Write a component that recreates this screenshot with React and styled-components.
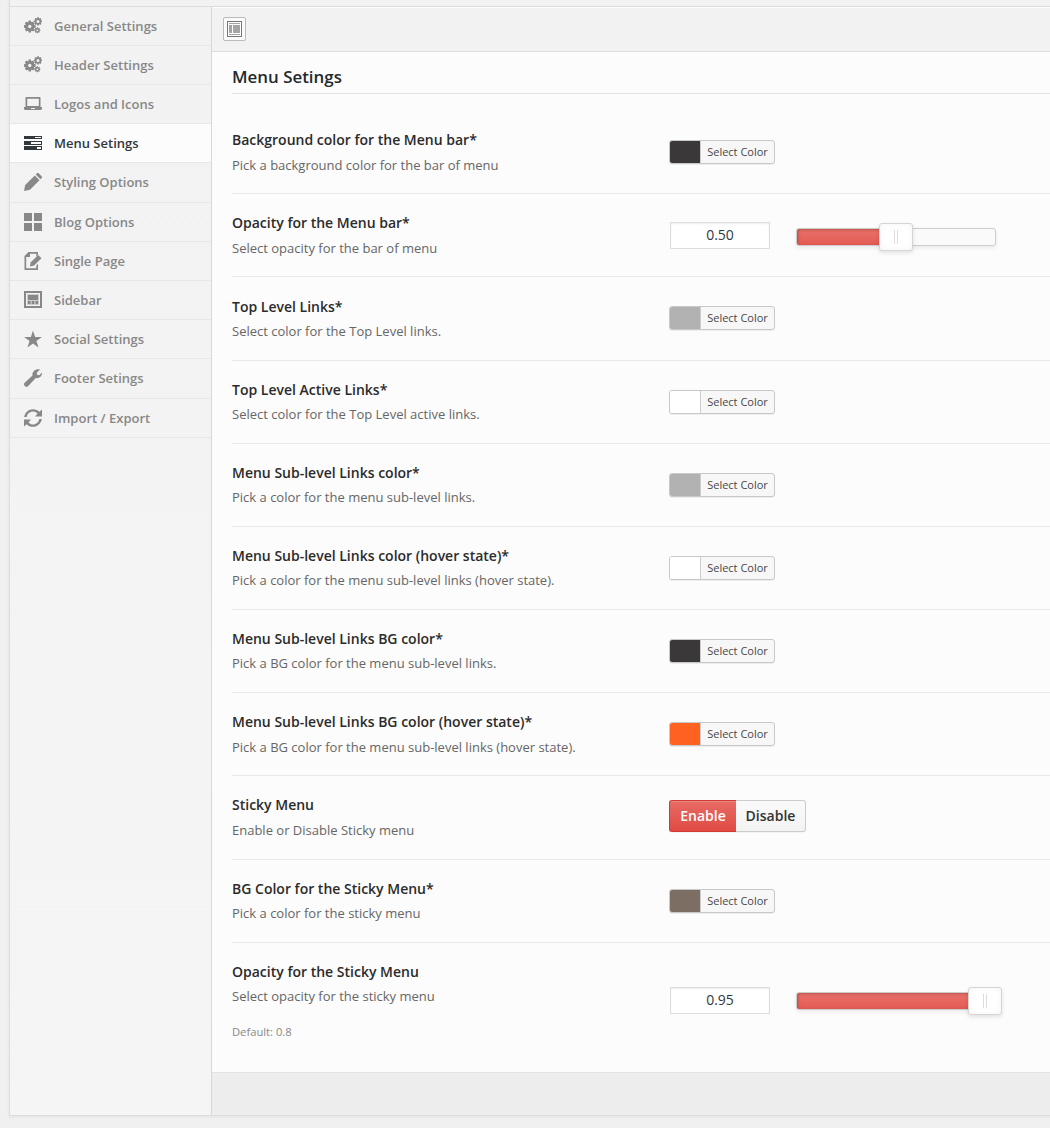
import React from 'react';
import styled, { createGlobalStyle, css } from 'styled-components';

const Global = createGlobalStyle`
  * { box-sizing: border-box; }
  html, body { margin: 0; padding: 0; }
  body {
    background: #f0f0f0;
    font-family: "Open Sans", "Liberation Sans", sans-serif;
    font-size: 13px;
    color: #444;
    overflow: hidden;
  }
`;

const Page = styled.div`
  height: 1128px;
  padding-left: 9px;
  overflow: hidden;
`;

const Panel = styled.div`
  width: 1100px;
  height: 1116px;
  border: 1px solid #dcdcdc;
  border-top: none;
  background: #f2f2f2;
  box-shadow: 0 1px 3px rgba(0, 0, 0, 0.06);
`;

const PanelTop = styled.div`
  height: 7px;
  border-bottom: 1px solid #dcdcdc;
`;

const PanelBody = styled.div`
  display: flex;
  height: 1108px;
`;

const Sidebar = styled.nav`
  width: 201px;
  flex: none;
  background: linear-gradient(#f2f2f2, #f5f5f5);
`;

const NavItem = styled.a`
  display: flex;
  align-items: flex-start;
  gap: 12px;
  height: ${(p) => (p.$tall ? 40 : 39)}px;
  padding: 10px 14px 0;
  border-bottom: 1px solid #e7e7e7;
  font-weight: 600;
  line-height: 18px;
  color: ${(p) => (p.$active ? '#32373c' : '#888')};
  background: ${(p) => (p.$active ? '#fcfcfc' : 'transparent')};

  svg { width: 18px; height: 18px; flex: none; display: block; fill: currentColor; }
`;

const Main = styled.main`
  flex: 1;
  display: flex;
  flex-direction: column;
  border-left: 1px solid #d8d8d8;
  background: #fcfcfc;
`;

const Toolbar = styled.div`
  height: 45px;
  padding: 10px 11px;
  border-bottom: 1px solid #dedede;
  background: #f2f2f2;
  box-shadow: inset 0 1px 0 #fcfcfc;
`;

const ExpandButton = styled.button`
  display: flex;
  align-items: center;
  justify-content: center;
  width: 23px;
  height: 24px;
  padding: 0;
  border: 1px solid #bbb;
  border-radius: 2px;
  background: #fafafa;
`;

const Content = styled.section`
  flex: 1;
  padding: 0 0 0 20px;
`;

const Heading = styled.h3`
  margin: 0 0 17px;
  height: 42px;
  padding-top: 13px;
  border-bottom: 1px solid #e4e4e4;
  font-size: 16.9px;
  line-height: 24px;
  font-weight: 600;
  color: #23282d;
`;

const Row = styled.div`
  display: flex;
  height: ${(p) => p.$height}px;
  border-bottom: ${(p) => (p.$last ? 'none' : '1px solid #e7e7e7')};
`;

const Label = styled.div`
  width: 437px;
  flex: none;
  padding-top: ${(p) => p.$top}px;
`;

const Title = styled.div`
  font-size: 14px;
  font-weight: 600;
  line-height: 20px;
  color: #2b2b2b;
`;

const Description = styled.div`
  margin-top: ${(p) => p.$gap}px;
  font-size: 13px;
  line-height: 18px;
  color: #666;
`;

const DefaultNote = styled.div`
  margin-top: 19px;
  font-size: 11.2px;
  line-height: 16px;
  color: #888;
`;

const Field = styled.div`
  display: flex;
  align-items: flex-start;
  padding-top: ${(p) => p.$top}px;
`;

const PickerButton = styled.button`
  display: flex;
  width: 106px;
  height: 24px;
  padding: 0;
  overflow: hidden;
  border: 1px solid #c8c8c8;
  border-radius: 3px;
  background: #f7f7f7;
  box-shadow: 0 1px 0 rgba(0, 0, 0, 0.06);
  font: 11px/22px "Open Sans", "Liberation Sans", sans-serif;
  color: #484848;
`;

const Swatch = styled.span`
  width: 30px;
  align-self: stretch;
  background: ${(p) => p.$color};
`;

const PickerText = styled.span`
  flex: 1;
  border-left: 1px solid #ccc;
  text-align: center;
`;

const NumberInput = styled.input`
  width: 100px;
  height: 27px;
  margin: 0 0 0 1px;
  padding: 0 0 3px;
  border: 1px solid #ddd;
  background: #fff;
  box-shadow: inset 0 1px 2px rgba(0, 0, 0, 0.07);
  font: 14px "Open Sans", "Liberation Sans", sans-serif;
  text-align: center;
  color: #32373c;
`;

const Track = styled.div`
  position: relative;
  width: 200px;
  height: 18px;
  margin: ${(p) => p.$offset}px 0 0 26px;
  border: 1px solid #ccc;
  border-radius: 3px;
  background: #fafafa;
  box-shadow: 0 2px 4px rgba(0, 0, 0, 0.07);
`;

const Fill = styled.div`
  height: 100%;
  border-radius: 2px;
  background: linear-gradient(#e8716a, #e45b53);
  box-shadow: inset 1px 1px 3px rgba(120, 40, 40, 0.4);
`;

const Handle = styled.div`
  position: absolute;
  top: -6px;
  width: 34px;
  height: 28px;
  margin-left: -17px;
  display: flex;
  align-items: center;
  justify-content: center;
  gap: 2px;
  border: 1px solid #d5d5d5;
  border-radius: 3px;
  background: #fff;
  box-shadow: inset 0 0 6px rgba(0, 0, 0, 0.05), 0 2px 4px rgba(0, 0, 0, 0.11);
`;

const Grip = styled.span`
  width: 1px;
  height: 14px;
  background: #ddd;
`;

const SwitchGroup = styled.div`
  display: flex;
  height: 32px;
  border-radius: 3px;
  box-shadow: 0 1px 0 rgba(0, 0, 0, 0.03);
`;

const SwitchOption = styled.button`
  width: ${(p) => p.$width}px;
  padding: 0;
  font: 600 14px/28px "Open Sans", "Liberation Sans", sans-serif;
  border: 1px solid #ccc;
  border-left: none;
  border-radius: 0 3px 3px 0;
  color: #333;
  background: linear-gradient(#fafafa, #f3f3f3);
  ${(p) => p.$on && css`
    border: 1px solid #cf3a32;
    border-right: none;
    border-radius: 3px 0 0 3px;
    color: #fff;
    background: linear-gradient(#e76b65, #e04b43);
    box-shadow: inset 0 1px 0 rgba(255, 255, 255, 0.2);
  `}
`;

const Footer = styled.footer`
  height: 43px;
  border-top: 1px solid #e3e3e3;
  background: #ededed;
`;

function gear(cx, cy, outer, inner, hole, teeth) {
  const pts = [];
  for (let i = 0; i < teeth; i++) {
    [[-0.38, inner], [-0.25, outer], [0.25, outer], [0.38, inner]].forEach(([o, r]) => {
      const a = ((i + o) / teeth) * Math.PI * 2;
      pts.push(`${(cx + r * Math.cos(a)).toFixed(2)} ${(cy + r * Math.sin(a)).toFixed(2)}`);
    });
  }
  return `M${pts.join('L')}ZM${cx - hole} ${cy}a${hole} ${hole} 0 1 0 ${2 * hole} 0a${hole} ${hole} 0 1 0 ${-2 * hole} 0Z`;
}

const Icon = ({ children }) => <svg viewBox="0 0 18 18">{children}</svg>;

const Cogs = () => (
  <Icon>
    <path fillRule="evenodd" d={gear(5.8, 9.5, 6, 4.7, 1.7, 8)} />
    <path fillRule="evenodd" d={gear(14, 4.4, 4.2, 3.2, 1.5, 8)} />
    <path fillRule="evenodd" d={gear(13.4, 13.3, 3, 2.3, 0.9, 8)} />
  </Icon>
);
const Laptop = () => (
  <Icon>
    <path fillRule="evenodd" d="M2.300 2h13.400c.5 0 .8.3.8.8V12H1.500V2.800C1.500 2.300 1.800 2 2.300 2ZM3.200 3.700V11h11.600V3.700Z" />
    <path fillRule="evenodd" d="M0 12h18v1.500c0 .9-.6 1.500-1.500 1.500h-15C.6 15 0 14.400 0 13.500ZM7 13h4v1H7Z" />
  </Icon>
);
const Lines = () => (
  <Icon>
    <path fillRule="evenodd" d="M0 2h18v3H0ZM11 3h6v1h-6ZM0 7h18v4H0ZM7 8h10v2H7ZM0 12h18v4H0ZM13 13h4v2h-4Z" />
  </Icon>
);
const Pencil = () => (
  <Icon>
    <path d="M1.200 12 10.800 2.500l4.700 4.700L6 16.800 0 18ZM11.700 1.600l1.100-1.100c.6-.6 1.500-.6 2.100 0l2.600 2.600c.6.6.6 1.500 0 2.100l-1.100 1.100Z" />
  </Icon>
);
const Grid = () => (
  <Icon><path d="M0 0h8v8H0ZM10 0h8v8h-8ZM0 10h8v8H0ZM10 10h8v8h-8Z" /></Icon>
);
const PageEdit = () => (
  <Icon>
    <path fillRule="evenodd" d="M4.500 0H14v3l-1.700 1.700V1.700H6V5H2.200v11.300h10.100V13.500L14 11.800V18H.5V4Z" />
    <path d="m6.800 10.200 7.400-7.200 3.300 3.200-7.400 7.300-4.300 1Z" />
  </Icon>
);
const Website = () => (
  <Icon>
    <path fillRule="evenodd" d="M0 0h18v17H0ZM2 2v13h14V2Z" />
    <path opacity=".35" d="M3 3h12v11H3Z" />
    <path d="M4 4h10v5H4ZM4 10h2.500v3H4ZM7.700 10h2.600v3H7.700ZM11.500 10H14v3h-2.500Z" />
  </Icon>
);
const Star = () => (
  <Icon><path d="m9 .5 2.100 6.400h6.800l-5.500 4 2.200 6.600L9 13.500l-5.600 4 2.200-6.600-5.500-4h6.800Z" /></Icon>
);
const Wrench = () => (
  <Icon>
    <path d="M16 .6 12.800 3.800l.4 2 2 .4L18 3.500c.2 3.800-2.600 6.300-6.200 5.600L4 17.200c-.8.8-2.100.8-2.900 0L.6 16.700c-.8-.8-.8-2.100 0-2.900l7.900-7.300C7.700 3 11.500-.8 16 .6Z" />
  </Icon>
);
const Refresh = () => (
  <Icon>
    <path d="M.2 8C.8 3.500 4.500.2 9 .2c2.600 0 4.800 1 6.400 2.600L18 .5V7.500h-7l2.500-2.700C12.300 3.300 10.800 2.500 9 2.500 6 2.500 3.300 4.800 2.700 8ZM17.800 10c-.6 4.500-4.300 7.800-8.800 7.800-2.600 0-4.800-1-6.400-2.600L0 17.500V10.500h7l-2.500 2.700c1.200 1.500 2.700 2.300 4.500 2.300 3 0 5.700-2.300 6.300-5.500Z" />
  </Icon>
);

const nav = [
  ['General Settings', Cogs],
  ['Header Settings', Cogs],
  ['Logos and Icons', Laptop],
  ['Menu Setings', Lines],
  ['Styling Options', Pencil, true],
  ['Blog Options', Grid],
  ['Single Page', PageEdit],
  ['Sidebar', Website],
  ['Social Settings', Star],
  ['Footer Setings', Wrench, true],
  ['Import / Export', Refresh],
];

const rows = [
  { title: 'Background color for the Menu bar*', text: 'Pick a background color for the bar of menu', color: '#3a3839', gap: 6 },
  { title: 'Opacity for the Menu bar*', text: 'Select opacity for the bar of menu', value: '0.50', percent: 50, gap: 6 },
  { title: 'Top Level Links*', text: 'Select color for the Top Level links.', color: '#b2b2b2', height: 84, labelTop: 20 },
  { title: 'Top Level Active Links*', text: 'Select color for the Top Level active links.', color: '#ffffff' },
  { title: 'Menu Sub-level Links color*', text: 'Pick a color for the menu sub-level links.', color: '#b2b2b2' },
  { title: 'Menu Sub-level Links color (hover state)*', text: 'Pick a color for the menu sub-level links (hover state).', color: '#ffffff' },
  { title: 'Menu Sub-level Links BG color*', text: 'Pick a BG color for the menu sub-level links.', color: '#3a3839' },
  { title: 'Menu Sub-level Links BG color (hover state)*', text: 'Pick a BG color for the menu sub-level links (hover state).', color: '#ff6121', gap: 6 },
  { title: 'Sticky Menu', text: 'Enable or Disable Sticky menu', toggle: true, gap: 6, height: 84 },
  { title: 'BG Color for the Sticky Menu*', text: 'Pick a color for the sticky menu', color: '#7d6e64' },
  { title: 'Opacity for the Sticky Menu', text: 'Select opacity for the sticky menu', note: 'Default: 0.8', value: '0.95', percent: 95, top: 44, offset: 5 },
];

function ColorField({ color }) {
  return (
    <Field $top={29}>
      <PickerButton>
        <Swatch $color={color} />
        <PickerText>Select Color</PickerText>
      </PickerButton>
    </Field>
  );
}

function SliderField({ value, percent, top = 28, offset = 6 }) {
  return (
    <Field $top={top}>
      <NumberInput value={value} readOnly />
      <Track $offset={offset}>
        <Fill style={{ width: `${percent}%` }} />
        <Handle style={{ left: `${percent}%` }}>
          <Grip />
          <Grip />
        </Handle>
      </Track>
    </Field>
  );
}

function ToggleField() {
  return (
    <Field $top={24}>
      <SwitchGroup>
        <SwitchOption $on $width={67}>Enable</SwitchOption>
        <SwitchOption $width={70}>Disable</SwitchOption>
      </SwitchGroup>
    </Field>
  );
}

export default function App() {
  return (
    <>
      <Global />
      <Page>
        <Panel>
          <PanelTop />
          <PanelBody>
            <Sidebar>
              {nav.map(([label, Glyph, tall]) => (
                <NavItem key={label} $active={label === 'Menu Setings'} $tall={tall}>
                  <Glyph />
                  {label}
                </NavItem>
              ))}
            </Sidebar>
            <Main>
              <Toolbar>
                <ExpandButton aria-label="Expand">
                  <svg width="15" height="16" viewBox="0 0 15 16">
                    <rect x=".5" y=".5" width="14" height="15" fill="#fff" stroke="#777" />
                    <path d="M2 2h11v1H2ZM2 4h3v8H2ZM6 4h7v8H6ZM2 13h11v1H2Z" fill="#a5a5a5" />
                  </svg>
                </ExpandButton>
              </Toolbar>
              <Content>
                <Heading>Menu Setings</Heading>
                {rows.map((r, i) => (
                  <Row key={r.title} $height={r.height || 83} $last={i === rows.length - 1}>
                    <Label $top={r.labelTop || 19}>
                      <Title>{r.title}</Title>
                      <Description $gap={r.gap || 5}>{r.text}</Description>
                      {r.note && <DefaultNote>{r.note}</DefaultNote>}
                    </Label>
                    {r.color && <ColorField color={r.color} />}
                    {r.value && (
                      <SliderField value={r.value} percent={r.percent} top={r.top} offset={r.offset} />
                    )}
                    {r.toggle && <ToggleField />}
                  </Row>
                ))}
              </Content>
              <Footer />
            </Main>
          </PanelBody>
        </Panel>
      </Page>
    </>
  );
}
